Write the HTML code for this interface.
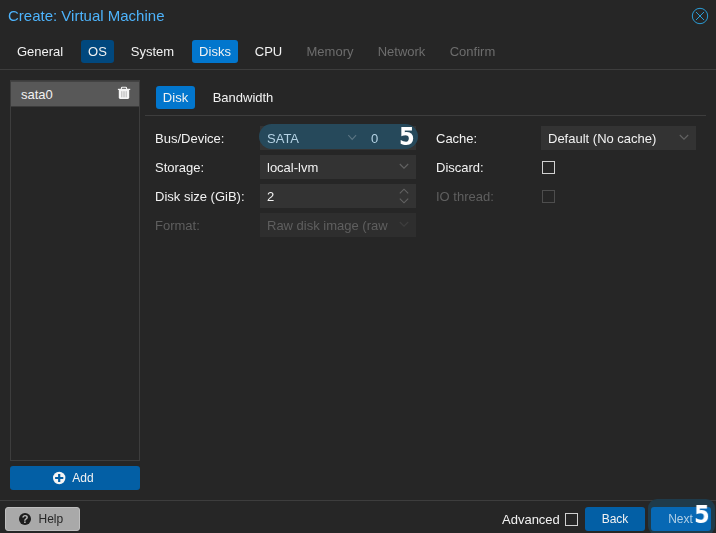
<!DOCTYPE html>
<html>
<head>
<meta charset="utf-8">
<title>Create: Virtual Machine</title>
<style>
html,body{margin:0;padding:0;}
body{width:716px;height:533px;overflow:hidden;background:#262626;font-family:"Liberation Sans",sans-serif;font-size:13px;color:#f2f2f2;position:relative;}
.abs{position:absolute;white-space:nowrap;}
.title{left:8px;top:6px;font-size:15px;line-height:20px;color:#4db3fb;}
.tab{top:40px;height:23px;line-height:23px;font-size:13px;color:#f2f2f2;border-radius:3px;text-align:center;}
.tab.dis{color:#6d6d6d;}
.hline{background:#3d3d3d;height:1px;}
.lbl{font-size:13px;line-height:26px;height:24px;color:#f2f2f2;}
.lbl.dis{color:#5f5f5f;}
.fld{height:24px;line-height:26px;background:#333333;font-size:13px;color:#f2f2f2;box-sizing:border-box;padding-left:7px;}
.fld.dis{color:#5f5f5f;background:#2e2e2e;}
.cb{width:11px;height:11px;border:1px solid #d0d0d0;background:#262626;}
.cb.dis{border-color:#4d4d4d;}
.btn{height:24px;line-height:24px;border-radius:3px;background:#035fa5;color:#f2f2f2;font-size:12px;text-align:center;}
.five{transform:scaleX(0.94);transform-origin:100% 50%;font-family:"DejaVu Sans","Liberation Sans",sans-serif;font-weight:bold;color:#ffffff;font-size:24px;line-height:26px;}
</style>
</head>
<body>
<!-- left list panel -->
<div class="abs" style="left:10px;top:80px;width:128px;height:379px;border:1px solid #3d3d3d;"></div>
<div class="abs" style="left:11px;top:81px;width:128px;height:24px;background:#585858;border-top:1px solid #434343;border-bottom:1px solid #3c3c3c;"></div>
<div class="abs" style="left:21px;top:82px;line-height:26px;font-size:13px;color:#f2f2f2;">sata0</div>
<svg class="abs" style="left:117px;top:86px" width="14" height="14" viewBox="0 0 14 14"><path d="M4.4 3 V2.2 Q4.4 1.3 5.3 1.3 H8.7 Q9.6 1.3 9.6 2.2 V3" fill="none" stroke="#f4f4f4" stroke-width="1.1"/><rect x="0.9" y="2.8" width="12.3" height="1.2" fill="#f4f4f4"/><path d="M1.8 4 V11.6 Q1.8 12.95 3.1 12.95 H10.9 Q12.2 12.95 12.2 11.6 V4 Z" fill="#f4f4f4"/><path d="M4.6 5.2V11.3M6.2 5.2V11.3M7.8 5.2V11.3M9.4 5.2V11.3" stroke="#585858" stroke-opacity="0.45" stroke-width="0.7"/></svg>

<div id="gs" style="position:absolute;left:0;top:0;width:716px;height:533px;will-change:transform;">
<div class="abs title">Create: Virtual Machine</div>
<svg class="abs" style="left:691px;top:7px" width="18" height="18" viewBox="0 0 18 18"><circle cx="9" cy="9" r="7.7" fill="none" stroke="#2b9cd6" stroke-width="1"/><path d="M5 5 L13 13 M13 5 L5 13" stroke="#2b9cd6" stroke-width="1" fill="none"/></svg>

<div class="abs tab" style="left:10px;width:60px;">General</div>
<div class="abs tab" style="left:81px;width:33px;background:#01487e;">OS</div>
<div class="abs tab" style="left:124px;width:57px;">System</div>
<div class="abs tab" style="left:192px;width:46px;background:#0276cd;">Disks</div>
<div class="abs tab" style="left:248px;width:41px;">CPU</div>
<div class="abs tab dis" style="left:300px;width:60px;">Memory</div>
<div class="abs tab dis" style="left:371px;width:61px;">Network</div>
<div class="abs tab dis" style="left:443px;width:59px;">Confirm</div>
<div class="abs hline" style="left:0;top:69px;width:716px;"></div>

<div class="abs btn" style="left:10px;top:466px;width:130px;"><span style="position:relative;left:8px;">Add</span></div>
<svg class="abs" style="left:52px;top:471px" width="14" height="14" viewBox="0 0 14 14"><circle cx="7.2" cy="7" r="6.2" fill="#f4f4f4"/><path d="M7.2 2.9v8.2M3.1 7h8.2" stroke="#035fa5" stroke-width="2.2"/></svg>

<!-- sub tabs -->
<div class="abs tab" style="left:156px;top:86px;width:39px;background:#0276cd;">Disk</div>
<div class="abs tab" style="left:205px;top:86px;width:76px;">Bandwidth</div>
<div class="abs hline" style="left:145px;top:115px;width:561px;"></div>

<!-- form left -->
<div class="abs lbl" style="left:155px;top:126px;">Bus/Device:</div>
<div class="abs lbl" style="left:155px;top:155px;">Storage:</div>
<div class="abs lbl" style="left:155px;top:184px;">Disk size (GiB):</div>
<div class="abs lbl dis" style="left:155px;top:213px;">Format:</div>

<div class="abs fld" style="left:260px;top:126px;width:156px;">SATA</div>
<div class="abs fld" style="left:260px;top:155px;width:156px;">local-lvm</div>
<div class="abs fld" style="left:260px;top:184px;width:156px;">2</div>
<div class="abs fld dis" style="left:260px;top:213px;width:156px;">Raw disk image (raw</div>

<!-- highlight pill -->
<div class="abs" style="left:259px;top:124px;width:159px;height:25px;border-radius:13px;background:#26495b;"></div>
<div class="abs" style="left:267px;top:126px;line-height:26px;color:#b4d2e4;">SATA</div>
<div class="abs" style="left:371px;top:126px;line-height:26px;color:#b4d2e4;">0</div>
<svg class="abs" style="left:347px;top:134px" width="10" height="7" viewBox="0 0 10 7"><path d="M1.3 1.2 L5.2 5.4 L9.1 1.2" fill="none" stroke="#5b7583" stroke-width="1.1"/></svg>
<div class="abs five" style="left:397.6px;top:124px;">5</div>

<svg class="abs" style="left:399px;top:163px" width="10" height="7" viewBox="0 0 10 7"><path d="M0.8 1 L5 5.2 L9.2 1" fill="none" stroke="#636363" stroke-width="1.1"/></svg>
<svg class="abs" style="left:399px;top:221px" width="10" height="7" viewBox="0 0 10 7"><path d="M0.8 1 L5 5.2 L9.2 1" fill="none" stroke="#3e3e3e" stroke-width="1.1"/></svg>
<svg class="abs" style="left:399px;top:188px" width="10" height="16" viewBox="0 0 10 16"><path d="M0.8 5.4 L5 1.2 L9.2 5.4 M0.8 10.6 L5 14.8 L9.2 10.6" fill="none" stroke="#636363" stroke-width="1.1"/></svg>

<!-- form right -->
<div class="abs lbl" style="left:436px;top:126px;">Cache:</div>
<div class="abs lbl" style="left:436px;top:155px;">Discard:</div>
<div class="abs lbl dis" style="left:436px;top:184px;">IO thread:</div>
<div class="abs fld" style="left:541px;top:126px;width:155px;">Default (No cache)</div>
<svg class="abs" style="left:679px;top:134px" width="10" height="7" viewBox="0 0 10 7"><path d="M0.8 1 L5 5.2 L9.2 1" fill="none" stroke="#636363" stroke-width="1.1"/></svg>
<div class="abs cb" style="left:542px;top:161px;"></div>
<div class="abs cb dis" style="left:542px;top:190px;"></div>

<!-- bottom bar -->
<div class="abs hline" style="left:0;top:500px;width:716px;"></div>
<div class="abs" style="left:5px;top:507px;width:73px;height:22px;border:1px solid #bebebe;border-radius:3px;background:#a9a9a9;"></div>
<svg class="abs" style="left:19.4px;top:513px" width="12" height="12" viewBox="0 0 12 12"><circle cx="6" cy="6" r="6" fill="#1c1c1c"/><text x="6" y="9.9" font-family="Liberation Sans, sans-serif" font-weight="bold" font-size="11" text-anchor="middle" fill="#b8b8b8">?</text></svg>
<div class="abs" style="left:38.5px;top:507px;line-height:24px;font-size:12px;color:#262626;">Help</div>

<div class="abs" style="left:502px;top:507px;line-height:25px;font-size:13px;color:#f2f2f2;">Advanced</div>
<div class="abs cb" style="left:565px;top:513px;"></div>
<div class="abs btn" style="left:585px;top:507px;width:60px;">Back</div>
<div class="abs" style="left:648px;top:499px;width:67px;height:36px;border-radius:9px;background:#1f3b4b;"></div>
<div class="abs btn" style="left:651px;top:507px;width:60px;color:#b0cfe6;background:#0768b4;"><span style="position:relative;left:-0.5px;">Next</span></div>
<div class="abs five" style="left:693px;top:502px;">5</div>
</div>
</body>
</html>
